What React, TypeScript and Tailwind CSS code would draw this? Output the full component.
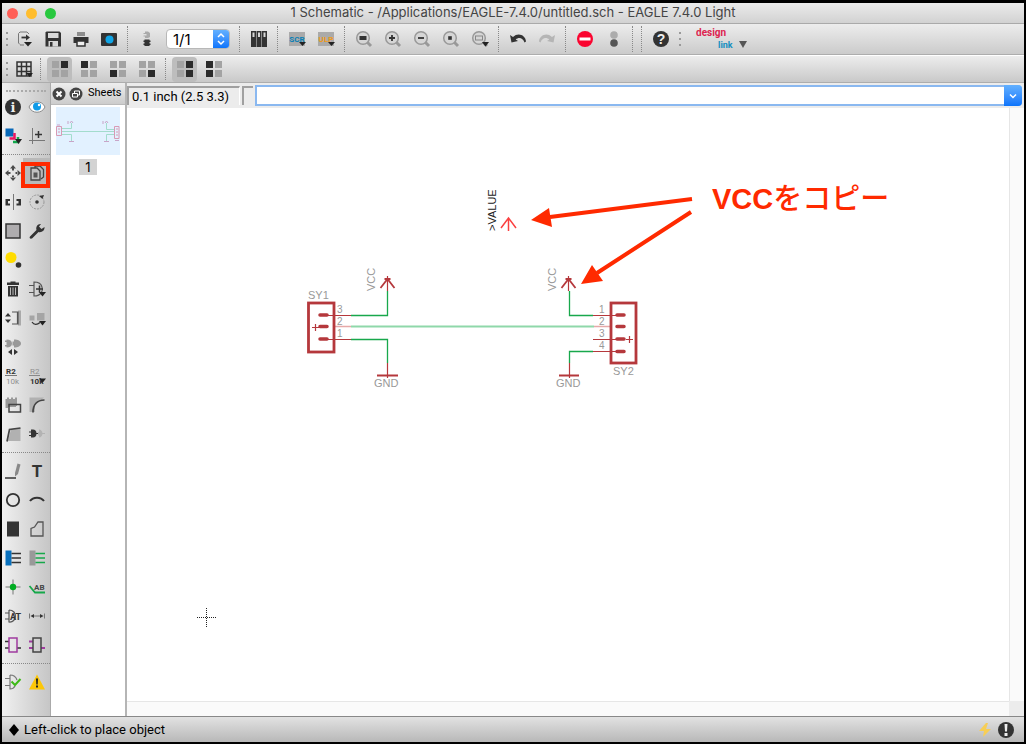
import type { ReactNode } from "react";

const K = "#333333";
const G = "#a3a3a3";
const GREEN = "#16a84a";
const PURPLE = "#a03ba0";
const WINE = "#b5383c";
const ROBOTO = "Roboto, sans-serif";

const icons: Record<string, ReactNode> = {
  open: (
    <>
      <path d="M5 15.500L3.500 14V4.500L5 3H12L14 5M5 16H9M14 14V15" fill="none" stroke="#777" strokeWidth="1" />
      <path d="M6.500 8.500H12" stroke={K} strokeWidth="1.800" />
      <path d="M11 5.500L15 8.500L11 11.500Z" fill={K} />
      <path d="M9 13H17L13 17.500Z" fill="#222" />
    </>
  ),
  save: (
    <>
      <path d="M3.500 2.500H16.500L18 4V17.500H2.500V3.500Z" fill={K} />
      <path d="M5 4H15.500V9H5ZM5.500 12H15V17.500H5.500Z" fill="#d8d8d8" />
      <path d="M7 13H9.500V17.500H7Z" fill={K} />
    </>
  ),
  print: (
    <>
      <path d="M6 3H14V7H6Z" fill="#8d8d8d" />
      <path d="M2.500 8H17.500V14H2.500Z" fill={K} />
      <path d="M6 12H14V17H6Z" fill="#f0f0f0" stroke={K} strokeWidth="1.500" />
    </>
  ),
  camera: (
    <>
      <rect x="2" y="4" width="16" height="13" rx="1" fill={K} />
      <circle cx="10.500" cy="10.500" r="4" fill="#10a5e6" />
    </>
  ),
  board: (
    <>
      <path d="M8 2.500H11L13 4V8L11 9H8V7.500H6.500V6.500H9.500V5H6.500V4H8Z" fill="#aaa" />
      <path d="M7.500 10.500H12.500V17H7.500ZM6.500 11.500H13.500V13H6.500ZM6.500 14.500H13.500V16H6.500Z" fill={K} />
    </>
  ),
  library: (
    <>
      <path d="M2 2H7V18H2ZM7.500 2H12.500V18H7.500ZM13 2H18V18H13Z" fill={K} />
      <path d="M3.500 3.500H5.500V8H3.500ZM9 3.500H11V8H9ZM14.500 3.500H16.500V8H14.500Z" fill="#d8d8d8" />
    </>
  ),
  scr: (
    <>
      <rect x="2" y="3" width="16" height="14" fill="#aaa" />
      <text x="10" y="13" textAnchor="middle" fontFamily={ROBOTO} fontSize="8" fontWeight="700" fill="#087fb5">SCR</text>
      <path d="M12 13H19L15.500 17Z" fill="#222" />
    </>
  ),
  ulp: (
    <>
      <rect x="2" y="3" width="16" height="14" fill="#aaa" />
      <text x="10" y="13" textAnchor="middle" fontFamily={ROBOTO} fontSize="8" fontWeight="700" fill="#f09a16">ULP</text>
      <path d="M12 13H19L15.500 17Z" fill="#222" />
    </>
  ),
  undo: <path d="M2 6L3.500 13.500L10 12L7.700 10.500C11 7.500 15 9 16.500 13.500L18 12.500C17.500 6 10 3 5 8Z" fill={K} />,
  redo: <path d="M18 6L16.500 13.500L10 12L12.300 10.500C9 7.500 5 9 3.500 13.500L2 12.500C2.500 6 10 3 15 8Z" fill="#b5b5b5" />,
  stop: (
    <>
      <circle cx="10" cy="10" r="8" fill="#fa0530" />
      <rect x="4.500" y="8.500" width="11" height="3" fill="#fff" />
    </>
  ),
  go: (
    <>
      <circle cx="10" cy="6" r="3.800" fill="#acacac" />
      <circle cx="10" cy="14" r="3.800" fill="#555" />
    </>
  ),
  help: (
    <>
      <circle cx="10" cy="10" r="8" fill={K} />
      <text x="10" y="15" textAnchor="middle" fontFamily="'Liberation Sans', sans-serif" fontSize="14" fontWeight="700" fill="#eee">?</text>
    </>
  ),
  grid: (
    <>
      <path d="M3 3H17V17H3ZM7.500 3V17M12.500 3V17M3 7.500H17M3 12.500H17" fill="none" stroke={K} strokeWidth="1.500" />
      <path d="M12 14H19L15.500 18Z" fill="#222" />
    </>
  ),
  info: (
    <>
      <circle cx="10" cy="10" r="8" fill={K} />
      <text x="10" y="15" textAnchor="middle" fontFamily="'DejaVu Serif', serif" fontSize="13" fontWeight="700" fill="#eee">i</text>
    </>
  ),
  eye: (
    <>
      <path d="M2 10C5 3 15 3 18 10C15 17 5 17 2 10Z" fill="#fff" stroke="#8a8a8a" strokeWidth="1" />
      <circle cx="10" cy="9.500" r="4" fill="#109be8" />
      <circle cx="12" cy="8" r="1.200" fill="#fff" />
    </>
  ),
  layers: (
    <>
      <rect x="2.500" y="2.500" width="8" height="8" fill="#0868b8" />
      <path d="M11.500 7V12.500H6.500" fill="none" stroke="#e91560" strokeWidth="2.500" />
      <path d="M15 11V16H10" fill="none" stroke="#12a84b" strokeWidth="2.500" />
      <path d="M12 13H19L15.500 18Z" fill="#222" />
    </>
  ),
  mark: (
    <>
      <path d="M5.500 2V18M2 14.500H18" stroke="#777" />
      <path d="M8 8.500H15M11.500 5V12" stroke={K} strokeWidth="1.500" />
    </>
  ),
  move: <path d="M10 2L13 5.500H7ZM10 18L13 14.500H7ZM2 10L5.500 7V13ZM18 10L14.500 7V13ZM9 5H11V7.500H9ZM9 12.500H11V15H9ZM5 9H7.500V11H5ZM12.500 9H15V11H12.500Z" fill="#4c4c4c" />,
  copy: (
    <>
      <path d="M8 5V3H13L16.500 6.500V14L14 16" fill="none" stroke="#444" strokeWidth="1.300" />
      <path d="M4 5H10L13 8V17H4Z" fill="#c2c2c2" stroke="#444" strokeWidth="1.300" />
      <rect x="6.500" y="9.500" width="4" height="5" fill="#555" />
    </>
  ),
  mirror: (
    <>
      <path d="M10.500 2V18" stroke="#777" />
      <path d="M2.500 7H7V9H5V11.500H7V13.500H2.500ZM18 7H13.500V9H15.500V11.500H13.500V13.500H18Z" fill={K} />
    </>
  ),
  rotate: (
    <>
      <circle cx="10" cy="10" r="7" fill="none" stroke="#999" strokeDasharray="2 1" />
      <circle cx="10" cy="10" r="1.800" fill={K} />
      <path d="M12 4L17 3L15.500 7Z" fill={K} />
    </>
  ),
  group: <rect x="3" y="3" width="14" height="14" fill="#aeacae" stroke={K} strokeWidth="1.500" />,
  change: <path d="M3 15.500L9.500 9C8.500 5.500 11 2.500 14 3L12 5.500L14.500 8L17.500 6C18 9.500 14.500 12 11.500 11L5 17.500C3 18 2 17 3 15.500Z" fill={K} />,
  paste: (
    <>
      <circle cx="8" cy="7.500" r="5.500" fill="#ffdc00" />
      <circle cx="15.500" cy="15" r="2.800" fill={K} />
    </>
  ),
  trash: (
    <>
      <path d="M4 3.500H16V6H4ZM7.500 2.500H12.500V4H7.500ZM5 7H15V17.500H5Z" fill={K} />
      <path d="M7.500 8.500V16M10 8.500V16M12.500 8.500V16" stroke="#bbb" />
    </>
  ),
  add: (
    <>
      <path d="M7 3V17C15 17 16 11 15 8C14 4 11 3 7 3ZM2 6.500H7M2 13.500H7" fill="none" stroke="#555" strokeWidth="1.200" />
      <path d="M9 10H16M12.500 6.500V13.500" stroke={K} strokeWidth="1.500" />
      <path d="M12 13H19L15.500 17.500Z" fill="#222" />
    </>
  ),
  pinswap: (
    <>
      <path d="M15 2.500H18V17.500H15Z" fill="#aaa" />
      <path d="M9 4H15V16H9M14.500 4V16" fill="none" stroke="#555" strokeWidth="1.200" />
      <path d="M2 8.500L5 5L8 8.500ZM2 11.500L5 15L8 11.500Z" fill={K} />
    </>
  ),
  replace: (
    <>
      <path d="M2.500 7.500H7.500V12.500H2.500ZM10 5H17.500V12.500H10Z" fill="#a5a5a5" />
      <path d="M5 14C7 17 10 17 13 14.500" fill="none" stroke={K} strokeWidth="1.300" />
      <path d="M12 13H19L15.500 17.500Z" fill="#222" />
    </>
  ),
  gateswap: (
    <>
      <path d="M3.500 2.500C7 2.500 9 4 9 6.500C9 9 7 10.500 3.500 10.500V9.500H2V8H3.500V5H2V3.500H3.500ZM11 2.500C15 2.500 18 4 18 6.500C18 9 15 10.500 11 10.500V8.500H9.500V4.500H11Z" fill="#999" />
      <path d="M9 12L5 15L9 18ZM11 12L15 15L11 18Z" fill={K} />
    </>
  ),
  name: (
    <>
      <text x="3" y="8" fontFamily={ROBOTO} fontSize="8" fontWeight="700" fill={K}>R2</text>
      <path d="M2 9.500H14" stroke="#777" />
      <text x="3" y="18" fontFamily={ROBOTO} fontSize="8" fill="#8f8f8f">10k</text>
    </>
  ),
  value: (
    <>
      <text x="3" y="8" fontFamily={ROBOTO} fontSize="8" fill="#8f8f8f">R2</text>
      <path d="M2 9.500H13" stroke="#888" />
      <text x="3" y="18" fontFamily={ROBOTO} fontSize="8" fontWeight="700" fill={K}>10k</text>
      <path d="M12 12.500H19L15.500 17Z" fill="#222" />
    </>
  ),
  smash: (
    <>
      <path d="M2.500 4H4V2.500H6V4H8V2.500H10V4H12V2.500H14V11H13V12H5V13H2.500Z" fill="#999" />
      <path d="M6 9.500H17.500V17H6Z" fill="none" stroke="#444" strokeWidth="1.500" />
    </>
  ),
  miter: (
    <>
      <path d="M2.500 2.500H17L8 10V17H2.500Z" fill="#b1b1b1" />
      <path d="M6 17.500C6 10 10 5 17.500 5" fill="none" stroke="#444" strokeWidth="1.700" />
    </>
  ),
  split: (
    <>
      <path d="M8 5L17.500 4V17H5Z" fill="#b1b1b1" />
      <path d="M4 17.500L6.500 5.500L17.500 4" fill="none" stroke="#444" strokeWidth="1.700" />
    </>
  ),
  invoke: (
    <>
      <path d="M4 5.500H6C8 5.500 9.500 7 9.500 9.500C9.500 12 8 13.500 6 13.500H4V12H2V11H4V8.500H2V7.500H4Z" fill={K} />
      <path d="M9 9.500H12" stroke={K} />
      <path d="M12 5.500C14 5.500 15 7 15.500 9H18V10H15.500C15 12 14 13.500 12 13.500V11.500H11V8H12Z" fill="#b3b3b3" />
    </>
  ),
  wire: (
    <>
      <path d="M2 17H13" stroke={K} strokeWidth="1.500" />
      <path d="M14.500 2.500L17.500 3.500L15 13L12 15.500V12Z" fill="#888" />
    </>
  ),
  text: (
    <text x="10" y="16" textAnchor="middle" fontFamily={ROBOTO} fontSize="17" fontWeight="700" fill={K}>T</text>
  ),
  circle: <circle cx="10" cy="10" r="6.200" fill="none" stroke={K} strokeWidth="1.800" />,
  arc: <path d="M3 11C6 6.500 14 6.500 17 11" fill="none" stroke={K} strokeWidth="2" />,
  rect: <path d="M4 2.500H16V17.500H4Z" fill={K} />,
  polygon: <path d="M4 17V9.500L7.500 8L11 3H16V17Z" fill="none" stroke="#555" strokeWidth="1.300" />,
  bus: (
    <>
      <path d="M2.500 2.500H8.500V17.500H2.500Z" fill="#0870bd" />
      <path d="M8.500 5.500H18M8.500 10H18M8.500 14.500H18" stroke={K} strokeWidth="1.500" />
    </>
  ),
  net: (
    <>
      <path d="M2.500 2.500H8.500V17.500H2.500Z" fill="#999" />
      <path d="M8.500 5.500H18M8.500 10H18M8.500 14.500H18" stroke={GREEN} strokeWidth="1.700" />
    </>
  ),
  junction: (
    <>
      <path d="M10 2.500V17.500M2.500 10H17.500" stroke="#777" />
      <circle cx="10" cy="10" r="3.200" fill="#00ac22" />
    </>
  ),
  label: (
    <>
      <path d="M2.500 9L8 15.500H18" fill="none" stroke={GREEN} strokeWidth="1.800" />
      <text x="7" y="13" fontFamily={ROBOTO} fontSize="8" fontWeight="700" fill="#444">AB</text>
    </>
  ),
  attribute: (
    <>
      <path d="M6 4V16C14 17 15 4 6 4M2 7H6M2 13H6" fill="none" stroke="#555" strokeWidth="1.200" />
      <text x="7" y="14" fontFamily={ROBOTO} fontSize="9" fontWeight="700" fill={K}>AT</text>
    </>
  ),
  dimension: (
    <>
      <path d="M2.500 7.500V12.500M17.500 7.500V12.500M5 10H15" stroke="#777" />
      <path d="M3.500 10L7 8V12ZM16.500 10L13 8V12Z" fill={K} />
    </>
  ),
  module: (
    <>
      <path d="M2 6.500H6M2 13H6M14 13H18" stroke={K} strokeWidth="1.700" />
      <path d="M6 3H14V17H6Z" fill="none" stroke={PURPLE} strokeWidth="1.500" />
    </>
  ),
  port: (
    <>
      <path d="M2 6.500H6M2 13H6M14 13H18" stroke={PURPLE} strokeWidth="1.800" />
      <path d="M6 3H14V17H6Z" fill="none" stroke="#444" strokeWidth="1.500" />
    </>
  ),
  erc: (
    <>
      <path d="M7 3V17C9 17 11 16 12 14M7 3C11 3 13 5 14 8M2 6.500H7M2 13.500H7" fill="none" stroke="#777" strokeWidth="1.200" />
      <path d="M8.500 9.500L12 13L17.500 7" fill="none" stroke="#3dba16" strokeWidth="2" />
    </>
  ),
  errors: (
    <>
      <path d="M10 2.500L18 17.500H2Z" fill="#fcc707" />
      <path d="M9 6.500H11L10.700 12.500H9.300ZM9 13.500H11V15.500H9Z" fill="#222" />
    </>
  ),
};

const lens = (inner: ReactNode) => (
  <>
    <path d="M13 13L17 17" stroke="#999" strokeWidth="3" />
    <circle cx="9" cy="9" r="6.300" fill="#d6d6d6" stroke="#999" strokeWidth="1.500" />
    {inner}
  </>
);
icons.zoomFit = lens(<rect x="5.500" y="7" width="7" height="4" fill={K} />);
icons.zoomIn = lens(<path d="M6 9H12M9 6V12" stroke={K} strokeWidth="1.800" />);
icons.zoomOut = lens(<path d="M6 9H12" stroke={K} strokeWidth="1.800" />);
icons.zoomRedraw = lens(<rect x="7.200" y="7.200" width="3.600" height="3.600" fill={K} />);
icons.zoomSelect = lens(
  <>
    <rect x="5.500" y="7" width="7" height="4" fill="none" stroke="#888" />
    <path d="M12 13H19L15.500 17.500Z" fill="#222" />
  </>,
);

const quad = (on: number[]) => (
  <>
    {[0, 1, 2, 3].map((i) => (
      <rect
        key={i}
        x={i % 2 ? 11 : 2}
        y={i > 1 ? 11 : 2}
        width="7"
        height="7"
        fill={on.includes(i) ? "#2b2b2b" : G}
      />
    ))}
  </>
);
icons.layerTR = quad([1]);
icons.layerTL = quad([0]);
icons.layerBL = quad([2]);
icons.layerBR = quad([3]);
icons.layerR = quad([1, 3]);
icons.layerL = quad([0, 2]);

function Icon({ name }: { name: string }) {
  return (
    <svg viewBox="0 0 20 20" className="size-5 shrink-0" aria-hidden="true">
      {icons[name]}
    </svg>
  );
}

function Tools({ names, className }: { names: string[]; className: string }) {
  return (
    <>
      {names.map((n) => (
        <button key={n} type="button" aria-label={n} className={`flex shrink-0 items-center justify-center ${className}`}>
          <Icon name={n} />
        </button>
      ))}
    </>
  );
}

function Sep() {
  return (
    <span className="flex h-full w-[9px] shrink-0 justify-center py-0.5">
      <span className="border-l border-dotted border-[#888]" />
    </span>
  );
}

function Handle() {
  return (
    <span className="flex w-[9px] shrink-0 flex-col items-center gap-1">
      <span className="size-0.5 bg-[#999]" />
      <span className="size-0.5 bg-[#999]" />
      <span className="size-0.5 bg-[#999]" />
    </span>
  );
}

function Palette() {
  const groups = [
    ["info", "eye", "layers", "mark"],
    ["move", "copy", "mirror", "rotate", "group", "change", "paste", "", "trash", "add", "pinswap", "replace", "gateswap", "", "name", "value", "smash", "miter", "split", "invoke"],
    ["wire", "text", "circle", "arc", "rect", "polygon", "bus", "net", "junction", "label", "attribute", "dimension", "module", "port"],
    ["erc", "errors"],
  ];
  return (
    <nav aria-label="Tools" className="w-[49px] shrink-0 border-r border-[#aaa] bg-linear-to-r from-[#f0f0f0] to-[#c6c6c6]">
      <div className="px-1 pt-[7px]">
        <div className="border-t-2 border-dotted border-[#aaa]" />
      </div>
      {groups.map((g, gi) => (
        <div key={gi}>
          {gi > 0 && (
            <div className="flex h-2 items-center">
              <span className="w-full border-t border-dotted border-[#888]" />
            </div>
          )}
          <div className="grid grid-cols-[21px_27px]">
            {g.map((n, i) =>
              n ? (
                <button
                  key={i}
                  type="button"
                  aria-label={n}
                  className={`relative flex h-[29px] items-center justify-center ${n === "copy" ? "bg-[#b9b9b9]" : ""}`}
                >
                  <Icon name={n} />
                  {n === "copy" && <span className="absolute top-1 right-0 -bottom-px -left-0.5 z-10 border-4 border-[#ff2a00]" />}
                </button>
              ) : (
                <span key={i} />
              ),
            )}
          </div>
        </div>
      ))}
    </nav>
  );
}

function Thumbnail() {
  return (
    <svg viewBox="0 0 64 48" className="h-12 w-16" aria-hidden="true">
      <rect width="64" height="48" fill="#e2f1ff" />
      <path d="M5 21.500H15.500V16M5 24.500H58M5 27.500H15.500V34M58 22.500H50.500V16M58 27.500H50.500V34" fill="none" stroke="#a3dccd" />
      <path d="M0.500 19.500H5.500V28.500H0.500ZM58.500 19.500H63V31.500H58.500ZM2 22H4M2 25H4M60 22H62M60 25H62M60 28H62" fill="none" stroke="#d89ab4" />
      <path d="M14 16L15.500 14L17 16M12 14V17M13 34.500H18M49 16L50.500 14L52 16M47 14V17M48 34.500H53M1 18H4M59 33.500H63" fill="none" stroke="#c8a5c8" />
    </svg>
  );
}

function Vcc({ x }: { x: number }) {
  return (
    <g fill="none" stroke={WINE}>
      <path d={`M${x} 276V291`} strokeWidth="1.200" />
      <path d={`M${x - 7} 288L${x} 279L${x + 7} 288M${x - 3} 279H${x + 3}`} strokeWidth="1.800" />
    </g>
  );
}

function Schematic() {
  return (
    <svg width="883" height="592" viewBox="127 108 883 592" className="block max-w-none shrink-0" role="img" aria-label="Schematic">
      <g fill="none" stroke="#18a84c" strokeWidth="1.300">
        <path d="M351 315.500H387.500V291M351 339.500H387.500V363M569.500 291V315.500H593M569.500 363V351.500H593" />
        <path d="M351 326.500H594" stroke="#8fd8aa" strokeWidth="1.800" />
      </g>
      <g fill="none" stroke={WINE} strokeWidth="1.200">
        <path d="M324 315.500H351M324 339.500H351M593 315.500H620M593 339.500H620M593 351.500H620M387.500 363V378M569.500 363V378" />
        <path d="M334 326.500H351M594 326.500H612" stroke="#e6a9a9" strokeWidth="1.500" />
        <rect x="308.500" y="303" width="25.500" height="49" strokeWidth="2.800" />
        <rect x="611" y="303" width="25" height="60" strokeWidth="2.800" />
        <path d="M377 375.500H398M559 375.500H579" strokeWidth="1.800" />
        <path d="M312 327.500H319M315.500 324V331M626 339.500H633M629.500 336V343" />
        <path
          d="M320 315H327M320 326.500H327M320 339H327M617 315H624M617 326.500H624M617 339H624M617 351.500H624"
          strokeWidth="3.500"
          strokeLinecap="round"
        />
      </g>
      <Vcc x={387.5} />
      <Vcc x={568.5} />
      <path d="M501 228L508.500 218L516 228M508.500 218V231" fill="none" stroke="#fa4040" strokeWidth="1.500" />
      <g fill="#999" fontFamily="'Liberation Sans', Arial, sans-serif" fontSize="11">
        <text x="308" y="299">SY1</text>
        <text x="613" y="375">SY2</text>
        <text x="374" y="387">GND</text>
        <text x="556" y="387">GND</text>
        <text transform="translate(375 291) rotate(-90)">VCC</text>
        <text transform="translate(556 291) rotate(-90)">VCC</text>
        <text transform="translate(496 231) rotate(-90)" fill="#222">&gt;VALUE</text>
        <g fontSize="10">
          <text x="337" y="313">3</text>
          <text x="337" y="325">2</text>
          <text x="337" y="337">1</text>
          <text x="599" y="313">1</text>
          <text x="599" y="325">2</text>
          <text x="599" y="337">3</text>
          <text x="599" y="349">4</text>
        </g>
      </g>
      <g stroke="#ff2a00" strokeWidth="4" fill="#ff2a00">
        <path d="M692 199L550 217M691 212L597 273" />
        <path d="M531 220L549 208L552 227ZM581 284L592 265L603 281Z" stroke="none" />
      </g>
      <text x="712" y="209" fill="#ff2a00" fontSize="29" fontWeight="700" fontFamily="'Liberation Sans', 'Noto Sans CJK JP', sans-serif">
        VCC<tspan fontWeight="500" fontFamily="'Noto Sans CJK JP', sans-serif">をコピー</tspan>
      </text>
      <path d="M197 617.500H216M206.500 608V627" stroke="#222" strokeDasharray="1 1" />
    </svg>
  );
}

export default function App() {
  return (
    <div className="flex min-h-screen flex-col border-2 border-t-3 border-black bg-[#ececec] font-['Roboto',sans-serif] text-[13px] text-black">
      <header className="relative flex h-[21px] shrink-0 items-center justify-center border-b border-[#aaa] bg-linear-to-b from-[#ebebeb] to-[#d2d2d2]">
        <div className="absolute left-[5px] flex gap-2">
          <button type="button" aria-label="Close" className="size-[11px] rounded-full bg-[#ff5f57]" />
          <button type="button" aria-label="Minimize" className="size-[11px] rounded-full bg-[#ffbd2e]" />
          <button type="button" aria-label="Zoom" className="size-[11px] rounded-full bg-[#28c83f]" />
        </div>
        <h1 className="font-['Inter',sans-serif] text-[13px] text-[#444]">1 Schematic - /Applications/EAGLE-7.4.0/untitled.sch - EAGLE 7.4.0 Light</h1>
      </header>

      <div role="toolbar" className="flex h-[31px] shrink-0 items-center border-b border-[#adadad] bg-linear-to-b from-[#ededed] to-[#cbcbcb]">
        <Handle />
        <Tools names={["open", "save", "print", "camera"]} className="w-7" />
        <Sep />
        <Tools names={["board"]} className="w-[29px]" />
        <div className="relative mx-[5px] h-5 w-16 shrink-0 overflow-hidden rounded border border-[#b8b8b8] bg-white">
          <select aria-label="Sheet" defaultValue="1/1" className="h-full w-full appearance-none pl-1.5 font-['Inter',sans-serif] text-[15px] leading-none">
            <option>1/1</option>
          </select>
          <span className="pointer-events-none absolute inset-y-0 right-0 flex w-4 items-center justify-center bg-linear-to-b from-[#62b0ff] to-[#0a74fb]">
            <svg viewBox="0 0 10 14" className="h-3.5 w-2.5" aria-hidden="true">
              <path d="M2 5L5 2L8 5M2 9L5 12L8 9" fill="none" stroke="#fff" strokeWidth="1.500" />
            </svg>
          </span>
        </div>
        <Sep />
        <Tools names={["library"]} className="w-[29px]" />
        <Sep />
        <Tools names={["scr", "ulp"]} className="w-[29px]" />
        <Sep />
        <Tools names={["zoomFit", "zoomIn", "zoomOut", "zoomRedraw", "zoomSelect"]} className="w-[29px]" />
        <Sep />
        <Tools names={["undo", "redo"]} className="w-[29px]" />
        <Sep />
        <Tools names={["stop", "go"]} className="w-[29px]" />
        <Sep />
        <Sep />
        <Tools names={["help"]} className="w-[29px]" />
        <Handle />
        <button type="button" aria-label="design link" className="ml-3 flex shrink-0 items-center">
          <svg viewBox="0 0 54 22" className="h-[22px] w-[54px]" aria-hidden="true">
            <text x="0" y="8" fontFamily={ROBOTO} fontSize="10" fontWeight="700" fill="#dd2450">design</text>
            <text x="22" y="20" fontFamily={ROBOTO} fontSize="9" fontWeight="700" fill="#168fc0">link</text>
            <path d="M43 13H51L47 20Z" fill="#555" />
          </svg>
        </button>
      </div>

      <div role="toolbar" className="flex h-7 shrink-0 items-center border-t border-b border-t-white border-b-[#adadad] bg-linear-to-b from-[#ededed] to-[#c9c9c9]">
        <Handle />
        <Tools names={["grid"]} className="w-[25px]" />
        <Sep />
        <div className="flex gap-1 px-0.5">
          <Tools names={["layerTR"]} className="h-[25px] w-[25px] rounded bg-[#bdbdbd]" />
          <Tools names={["layerTL", "layerBL", "layerBR"]} className="h-[25px] w-[25px]" />
        </div>
        <Sep />
        <div className="flex gap-1 px-0.5">
          <Tools names={["layerR"]} className="h-[25px] w-[25px] rounded bg-[#bdbdbd]" />
          <Tools names={["layerL"]} className="h-[25px] w-[25px]" />
        </div>
      </div>

      <div className="flex min-h-0 flex-1">
        <Palette />
        <aside className="flex w-[76px] shrink-0 flex-col border-r-2 border-[#b5b5b5]">
          <div className="flex h-[22px] items-center gap-[3px] border-b border-[#bbb] bg-linear-to-b from-[#eee] to-[#ccc] pl-px text-[11px]">
            <button type="button" aria-label="Close panel">
              <svg viewBox="0 0 14 14" className="size-3.5" aria-hidden="true">
                <circle cx="7" cy="7" r="6.500" fill="#444" />
                <path d="M4.500 4.500L9.500 9.500M9.500 4.500L4.500 9.500" stroke="#fff" strokeWidth="2" />
              </svg>
            </button>
            <button type="button" aria-label="Float panel">
              <svg viewBox="0 0 14 14" className="size-3.5" aria-hidden="true">
                <circle cx="7" cy="7" r="6.500" fill="#444" />
                <path d="M5.500 6V4H10.500V8H9M3.500 6.500H8.500V10H3.500Z" fill="none" stroke="#fff" />
              </svg>
            </button>
            <h2 className="pl-0.5">Sheets</h2>
          </div>
          <div className="flex flex-1 flex-col items-center gap-1 bg-white pt-0.5">
            <Thumbnail />
            <span className="bg-[#d3d3d3] px-1.5 font-['Inter',sans-serif] text-[13px] leading-4">1</span>
          </div>
        </aside>

        <main className="flex min-w-0 flex-1 flex-col">
          <div className="flex h-[25px] shrink-0 items-center gap-0.5 pr-0.5">
            <output className="flex h-[19px] w-[113px] shrink-0 items-center border-t-2 border-l-2 border-[#a0a0a0] border-r border-r-white pl-[3px]">
              0.1 inch (2.5 3.3)
            </output>
            <span className="h-[19px] w-[11px] shrink-0 border-t-2 border-l-2 border-[#a0a0a0]" />
            <div className="flex h-[21px] min-w-0 flex-1 rounded-r border-2 border-[#8ab8f0] bg-white">
              <input aria-label="Command" className="min-w-0 flex-1 px-1 outline-none" />
              <button type="button" aria-label="Command history" className="-my-0.5 -mr-0.5 flex w-[18px] items-center justify-center rounded-r bg-linear-to-b from-[#62b0ff] to-[#0a74fb]">
                <svg viewBox="0 0 8 8" className="size-2" aria-hidden="true">
                  <path d="M1 2.500L4 5.500L7 2.500" fill="none" stroke="#fff" strokeWidth="1.500" />
                </svg>
              </button>
            </div>
          </div>
          <div className="grid min-h-0 flex-1 grid-cols-[minmax(0,1fr)_15px] grid-rows-[minmax(0,1fr)_15px] bg-white">
            <div className="overflow-hidden">
              <Schematic />
            </div>
            <div className="border-l border-[#e6e6e6] bg-[#fafafa]" />
            <div className="border-t border-[#e6e6e6] bg-[#fafafa]" />
            <div className="bg-[#ececec]" />
          </div>
        </main>
      </div>

      <footer className="flex h-[26px] shrink-0 items-center border-t border-[#888] bg-linear-to-b from-[#e2e2e2] to-[#b8b8b8] pr-2.5 pl-1.5">
        <svg viewBox="0 0 12 14" className="h-3.5 w-3" aria-hidden="true">
          <path d="M6 1L11 7L6 13L1 7Z" fill="#000" />
        </svg>
        <p className="flex-1 pl-1">Left-click to place object</p>
        <svg viewBox="0 0 14 16" className="h-4 w-3.5" aria-hidden="true">
          <path d="M8 1L1 9H6L5 15L13 7H8L10 1Z" fill="#f7ce55" />
        </svg>
        <svg viewBox="0 0 16 16" className="ml-1.5 size-4" aria-hidden="true">
          <circle cx="8" cy="8" r="8" fill={K} />
          <path d="M6.500 2H9.500L9 9.500H7ZM6.500 11H9.500V14H6.500Z" fill="#eee" />
        </svg>
      </footer>
    </div>
  );
}
